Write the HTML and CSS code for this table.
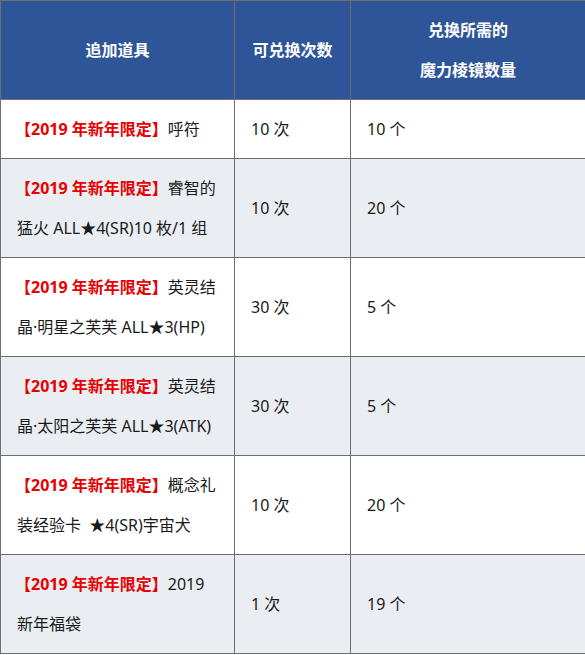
FILE: index.html
```html
<!DOCTYPE html>
<html lang="zh-CN">
<head>
<meta charset="utf-8">
<link rel="stylesheet" href="styles.css">
</head>
<body>
<table class="tbl">
  <colgroup>
    <col class="c1"><col class="c2"><col class="c3">
  </colgroup>
  <thead>
    <tr>
      <th>追加道具</th>
      <th>可兑换次数</th>
      <th>兑换所需的<br>魔力棱镜数量</th>
    </tr>
  </thead>
  <tbody>
    <tr>
      <td><span class="hl">【2019 年新年限定】</span>呼符</td>
      <td>10 次</td>
      <td>10 个</td>
    </tr>
    <tr class="alt">
      <td><span class="hl">【2019 年新年限定】</span>睿智的<br>猛火 ALL★4(SR)10 枚/1 组</td>
      <td>10 次</td>
      <td>20 个</td>
    </tr>
    <tr>
      <td><span class="hl">【2019 年新年限定】</span>英灵结<br>晶·明星之芙芙 ALL★3(HP)</td>
      <td>30 次</td>
      <td>5 个</td>
    </tr>
    <tr class="alt">
      <td><span class="hl">【2019 年新年限定】</span>英灵结<br>晶·太阳之芙芙 ALL★3(ATK)</td>
      <td>30 次</td>
      <td>5 个</td>
    </tr>
    <tr>
      <td><span class="hl">【2019 年新年限定】</span>概念礼<br>装经验卡 &nbsp;★4(SR)宇宙犬</td>
      <td>10 次</td>
      <td>20 个</td>
    </tr>
    <tr class="alt">
      <td><span class="hl">【2019 年新年限定】</span>2019<br>新年福袋</td>
      <td>1 次</td>
      <td>19 个</td>
    </tr>
  </tbody>
</table>
</body>
</html>
```
FILE: styles.css
```css
html, body {
  margin: 0;
  padding: 0;
  background: #ffffff;
}
body {
  font-family: "Noto Sans", "Noto Sans CJK SC", sans-serif;
  font-size: 16px;
  color: #1a1a1a;
}
.tbl {
  border-collapse: collapse;
  table-layout: fixed;
  width: 585px;
}
.c1 { width: 234px; }
.c2 { width: 116px; }
.c3 { width: 235px; }
.tbl th,
.tbl td {
  border: 1px solid #6e6e6e;
  padding: 9px 16px;
  line-height: 40px;
  vertical-align: middle;
  white-space: nowrap;
  text-align: left;
}
.tbl th {
  background: #2e5597;
  color: #ffffff;
  font-weight: 700;
  text-align: center;
  padding: 9px 8px;
}
.alt td {
  background: #eaeef2;
}
.hl {
  color: #e60000;
  font-weight: 700;
  margin-left: -2px;
}
```
